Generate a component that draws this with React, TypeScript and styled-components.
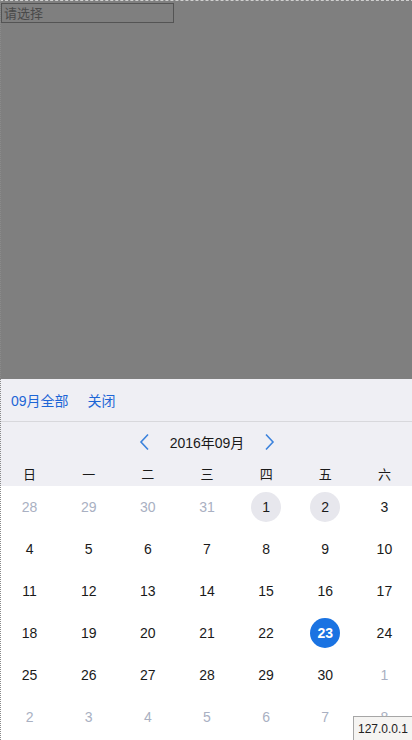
import styled, { createGlobalStyle } from "styled-components";

const GlobalStyle = createGlobalStyle`
  html, body {
    margin: 0;
    padding: 0;
    overflow: hidden;
    background: #ffffff;
    font-family: "Liberation Sans", "Noto Sans CJK SC", sans-serif;
  }
`;

const Page = styled.div`
  position: relative;
  width: 414px;
  height: 740px;
  display: flex;
  flex-direction: column;
  overflow: hidden;

  /* dotted page outline along the left and top edges */
  &::before {
    content: "";
    position: absolute;
    inset: 0;
    border-left: 1px dotted #8a8a8a;
    border-top: 1px dashed #d0d0d0;
    pointer-events: none;
    z-index: 3;
  }
`;

const Top = styled.div`
  position: relative;
  height: 379px;
  padding: 3px 0 0 1px;
  box-sizing: border-box;
`;

const SelectInput = styled.input`
  display: block;
  width: 173px;
  height: 20px;
  box-sizing: border-box;
  margin: 0;
  padding: 0 2px;
  border: 1px solid #a9a9a9;
  background: #ffffff;
  font-family: "Liberation Sans", "Noto Sans CJK SC", sans-serif;
  font-size: 13px;
  outline: none;
  &::placeholder {
    color: #959595;
  }
`;

const Mask = styled.div`
  position: absolute;
  inset: 0;
  background: rgba(0, 0, 0, 0.5);
`;

const Picker = styled.div`
  display: flex;
  flex-direction: column;
  background: #efeff4;
`;

const Toolbar = styled.div`
  height: 42px;
  display: flex;
  align-items: center;
  gap: 19px;
  padding-left: 11px;
  border-bottom: 1px solid #d8d8dc;
`;

const ToolButton = styled.span`
  font-size: 14px;
  color: #1d66d6;
`;

const MonthNav = styled.div`
  height: 40px;
  display: flex;
  align-items: center;
  justify-content: center;
  gap: 14px;
  font-size: 14px;
  color: #1a1a1a;
`;

const Arrow = styled.svg`
  width: 14px;
  height: 18px;
  margin: 0 4px;
`;

const Weekdays = styled.div`
  height: 24px;
  display: grid;
  grid-template-columns: repeat(7, 1fr);
  align-items: center;
  padding-bottom: 2px;
  box-sizing: border-box;
`;

const Weekday = styled.span`
  text-align: center;
  font-size: 13px;
  color: #1a1a1a;
`;

const Grid = styled.div`
  background: #ffffff;
  display: grid;
  grid-template-columns: repeat(7, 1fr);
  grid-auto-rows: 42px;
`;

const Cell = styled.div`
  display: flex;
  align-items: center;
  justify-content: center;
`;

const Day = styled.span<{ kind: "other" | "normal" | "range" | "selected" }>`
  width: 30px;
  height: 30px;
  border-radius: 50%;
  display: flex;
  align-items: center;
  justify-content: center;
  font-size: 14px;
  font-weight: ${(p) => (p.kind === "selected" ? "bold" : "normal")};
  color: ${(p) =>
    p.kind === "other" ? "#a9b0c2" : p.kind === "selected" ? "#ffffff" : "#1a1a1a"};
  background: ${(p) =>
    p.kind === "selected" ? "#1a73e2" : p.kind === "range" ? "#e7e7ed" : "transparent"};
`;

const Status = styled.div`
  position: fixed;
  right: 0;
  bottom: 0;
  height: 23px;
  padding: 0 4px;
  display: flex;
  align-items: center;
  background: #f5f4f2;
  border: 1px solid #a6a6a6;
  border-right: none;
  border-bottom: none;
  font-size: 12px;
  color: #222222;
  z-index: 4;
`;

const weekdays = ["日", "一", "二", "三", "四", "五", "六"];

type Kind = "other" | "normal" | "range" | "selected";

const days: { n: number; kind: Kind }[] = [
  ...[28, 29, 30, 31].map((n) => ({ n, kind: "other" as Kind })),
  ...Array.from({ length: 30 }, (_, i) => {
    const n = i + 1;
    const kind: Kind = n === 23 ? "selected" : n <= 2 ? "range" : "normal";
    return { n, kind };
  }),
  ...[1, 2, 3, 4, 5, 6, 7, 8].map((n) => ({ n, kind: "other" as Kind })),
];

export default function App() {
  return (
    <>
      <GlobalStyle />
      <Page>
        <Top>
          <SelectInput placeholder="请选择" readOnly />
          <Mask />
        </Top>
        <Picker>
          <Toolbar>
            <ToolButton>09月全部</ToolButton>
            <ToolButton>关闭</ToolButton>
          </Toolbar>
          <MonthNav>
            <Arrow viewBox="0 0 14 18">
              <path d="M10 1.5 L3 9 L10 16.5" fill="none" stroke="#3b82dc" strokeWidth="1.6" />
            </Arrow>
            <span>2016年09月</span>
            <Arrow viewBox="0 0 14 18">
              <path d="M4 1.5 L11 9 L4 16.5" fill="none" stroke="#3b82dc" strokeWidth="1.6" />
            </Arrow>
          </MonthNav>
          <Weekdays>
            {weekdays.map((w) => (
              <Weekday key={w}>{w}</Weekday>
            ))}
          </Weekdays>
          <Grid>
            {days.map((d, i) => (
              <Cell key={i}>
                <Day kind={d.kind}>{d.n}</Day>
              </Cell>
            ))}
          </Grid>
        </Picker>
        <Status>127.0.0.1</Status>
      </Page>
    </>
  );
}
